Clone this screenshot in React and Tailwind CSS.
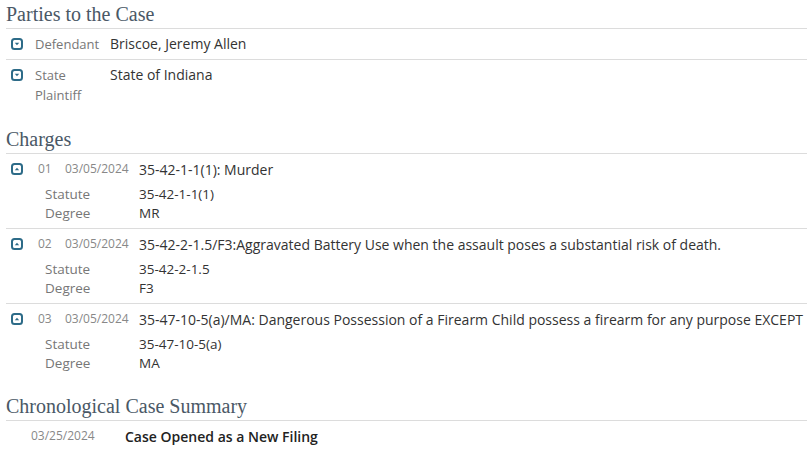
import React from 'react'

const CaretBox = ({ up }) => (
  <svg width="12" height="12" viewBox="0 0 12 12" className="block">
    <rect x="1" y="1" width="10" height="10" rx="2.5" fill="#fff" stroke="#2d6b88" strokeWidth="2" />
    {up ? (
      <path d="M3.8 7.2 L6 4.8 L8.2 7.2 Z" fill="#2d6b88" />
    ) : (
      <path d="M3.8 4.8 L6 7.2 L8.2 4.8 Z" fill="#2d6b88" />
    )}
  </svg>
)

const Heading = ({ children }) => (
  <h2 className="text-[20px] leading-[24px] text-[#4a5866] border-b border-[#dcdcdc] pb-[2px] font-['Liberation_Serif','DejaVu_Serif',serif]">
    {children}
  </h2>
)

const parties = [
  { role: ['Defendant'], name: 'Briscoe, Jeremy Allen' },
  { role: ['State', 'Plaintiff'], name: 'State of Indiana' }
]

const charges = [
  { no: '01', date: '03/05/2024', desc: '35-42-1-1(1): Murder', statute: '35-42-1-1(1)', degree: 'MR' },
  { no: '02', date: '03/05/2024', desc: '35-42-2-1.5/F3:Aggravated Battery Use when the assault poses a substantial risk of death.', statute: '35-42-2-1.5', degree: 'F3' },
  { no: '03', date: '03/05/2024', desc: '35-47-10-5(a)/MA: Dangerous Possession of a Firearm Child possess a firearm for any purpose EXCEPT', statute: '35-47-10-5(a)', degree: 'MA' }
]

export default function App() {
  return (
    <div className="w-[807px] h-[455px] overflow-hidden bg-white pl-[6px] pt-[2px] font-['Open_Sans','Liberation_Sans',sans-serif]">
      <Heading>Parties to the Case</Heading>
      <div>
        {parties.map((p, i) => (
          <div key={i} className={`flex pt-[5px] pb-[5px] ${i === 0 ? 'border-b border-[#dcdcdc]' : ''}`}>
            <div className="w-[29px] pl-[5px] pt-[4px]"><CaretBox /></div>
            <div className="w-[75px] text-[13px] leading-[20px] text-[#777]">
              {p.role.map((r) => <div key={r}>{r}</div>)}
            </div>
            <div className="text-[14px] leading-[20px] text-[#333]">{p.name}</div>
          </div>
        ))}
      </div>

      <div className="mt-[17px]">
        <Heading>Charges</Heading>
        {charges.map((c, i) => (
          <div key={c.no} className={`pt-[5px] pb-[5px] whitespace-nowrap ${i < charges.length - 1 ? 'border-b border-[#dcdcdc]' : ''}`}>
            <div className="flex items-center h-[20px]">
              <div className="w-[32px] pl-[5px]"><CaretBox up /></div>
              <div className="w-[27px] text-[12px] text-[#888]">{c.no}</div>
              <div className="w-[74px] text-[12px] text-[#888]">{c.date}</div>
              <div className="text-[14px] text-[#333]">{c.desc}</div>
            </div>
            <div className="mt-[6px] leading-[19px]">
              <div className="flex items-center">
                <div className="w-[133px] pl-[39px] text-[13.5px] text-[#777]">Statute</div>
                <div className="text-[13.5px] text-[#333]">{c.statute}</div>
              </div>
              <div className="flex items-center">
                <div className="w-[133px] pl-[39px] text-[13.5px] text-[#777]">Degree</div>
                <div className="text-[13.5px] text-[#333]">{c.degree}</div>
              </div>
            </div>
          </div>
        ))}
      </div>

      <div className="mt-[16px]">
        <Heading>Chronological Case Summary</Heading>
        <div className="flex items-center h-[20px] mt-[5px] whitespace-nowrap">
          <div className="w-[119px] pl-[25px] text-[12px] text-[#888]">03/25/2024</div>
          <div className="text-[14px] font-semibold text-[#222]">Case Opened as a New Filing</div>
        </div>
      </div>
    </div>
  )
}
